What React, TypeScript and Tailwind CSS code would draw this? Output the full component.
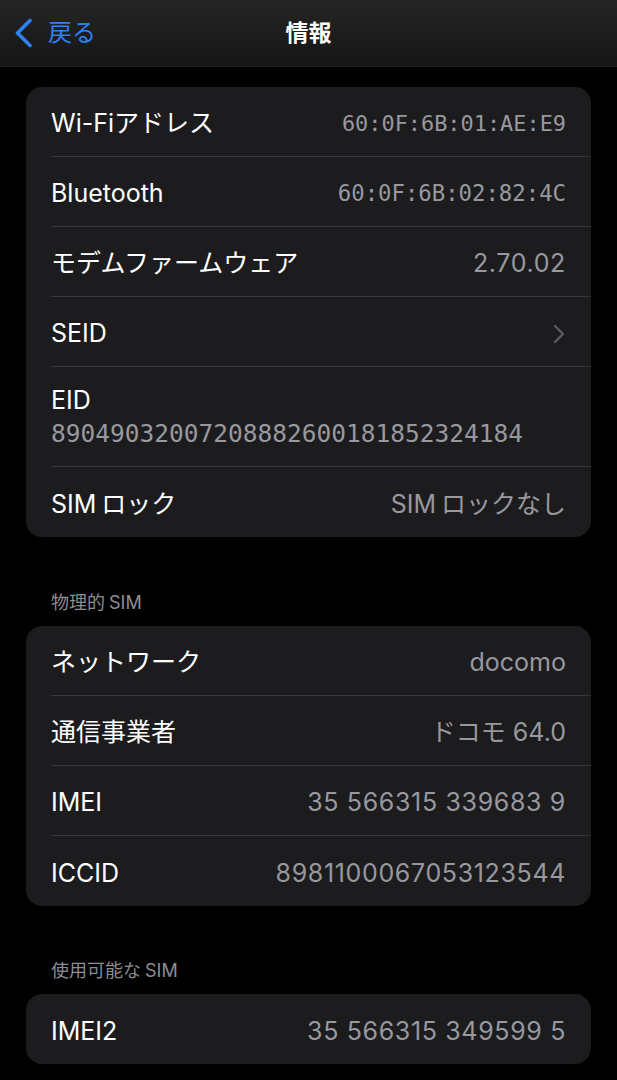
import React from "react";

const sans = { fontFamily: '"Inter", "Noto Sans CJK JP", sans-serif' };
const mono = { fontFamily: '"DejaVu Sans Mono", monospace' };

function Row({ label, value, isMono, chevron, last, monoSize, digits }: { label: React.ReactNode; value?: React.ReactNode; isMono?: boolean; chevron?: boolean; last?: boolean; monoSize?: string; digits?: boolean }) {
  return (
    <div className="pl-[25px]">
      <div className={`flex h-[70px] items-center justify-between pr-[25px] pt-[5px] ${last ? "" : "border-b border-[#38383a]"}`}>
        <span className="text-[25px] text-white" style={sans}>{label}</span>
        {chevron ? (
          <svg width="12" height="20" viewBox="0 0 12 20" className="mr-[1px]">
            <path d="M2 2 L10 10 L2 18" fill="none" stroke="#5b5b60" strokeWidth="2.4" strokeLinecap="round" strokeLinejoin="round" />
          </svg>
        ) : isMono ? (
          <span className={`${monoSize ?? "text-[21.9px]"} text-[#98989e]`} style={mono}>{value}</span>
        ) : (
          <span className={`text-[25px] text-[#98989e] ${digits ? "tracking-[0.65px]" : ""}`} style={sans}>{value}</span>
        )}
      </div>
    </div>
  );
}

function SectionHeader({ title }: { title: React.ReactNode }) {
  return (
    <div className="px-[51px] pb-[10px] text-[18px] text-[#8d8d93]" style={sans}>
      {title}
    </div>
  );
}

function Sim({ pre, post }: { pre?: string; post?: string }) {
  return (
    <>
      {pre}
      {pre ? <span className="inline-block w-[4px]" /> : null}
      SIM
      {post ? <span className="inline-block w-[5px]" /> : null}
      {post}
    </>
  );
}

export default function App() {
  return (
    <div className="min-h-[1080px] w-[617px] bg-black" style={sans}>
      <div className="relative flex h-[67px] items-center justify-center border-b border-[#222] bg-gradient-to-b from-[#262626] to-[#151515]">
        <div className="absolute left-[14px] top-0 flex h-full items-center gap-[15px]">
          <svg width="19" height="30" viewBox="0 0 19 30">
            <path d="M16 2.5 L3.5 15 L16 27.5" fill="none" stroke="#2f80f2" strokeWidth="3.6" strokeLinecap="round" strokeLinejoin="round" />
          </svg>
          <span className="text-[24px] text-[#2f80f2]" style={sans}>戻る</span>
        </div>
        <span className="text-[23px] font-bold text-white" style={sans}>情報</span>
      </div>

      <div className="px-[26px] pt-[20px]">
        <div className="overflow-hidden rounded-[16px] bg-[#1c1c1e]">
          <Row label="Wi-Fiアドレス" value="60:0F:6B:01:AE:E9" isMono />
          <Row label="Bluetooth" value="60:0F:6B:02:82:4C" isMono monoSize="text-[22.3px]" />
          <Row label="モデムファームウェア" value="2.70.02" digits />
          <Row label="SEID" chevron />
          <div className="pl-[25px]">
            <div className="flex h-[100px] flex-col justify-center border-b border-[#38383a] pr-[25px] pt-[3px]">
              <span className="text-[25px] leading-[32px] text-white" style={sans}>EID</span>
              <span className="text-[24.5px] leading-[36px] text-[#98989e]" style={mono}>89049032007208882600181852324184</span>
            </div>
          </div>
          <Row label={<Sim post="ロック" />} value={<Sim post="ロックなし" />} last />
        </div>
      </div>

      <div className="pt-[52px]">
        <SectionHeader title={<Sim pre="物理的" />} />
        <div className="px-[26px]">
          <div className="overflow-hidden rounded-[16px] bg-[#1c1c1e]">
            <Row label="ネットワーク" value="docomo" />
            <Row label="通信事業者" value="ドコモ 64.0" />
            <Row label="IMEI" value="35 566315 339683 9" digits />
            <Row label="ICCID" value="8981100067053123544" digits last />
          </div>
        </div>
      </div>

      <div className="pt-[51px]">
        <SectionHeader title={<Sim pre="使用可能な" />} />
        <div className="px-[26px]">
          <div className="overflow-hidden rounded-[16px] bg-[#1c1c1e]">
            <Row label="IMEI2" value="35 566315 349599 5" digits last />
          </div>
        </div>
      </div>
    </div>
  );
}
